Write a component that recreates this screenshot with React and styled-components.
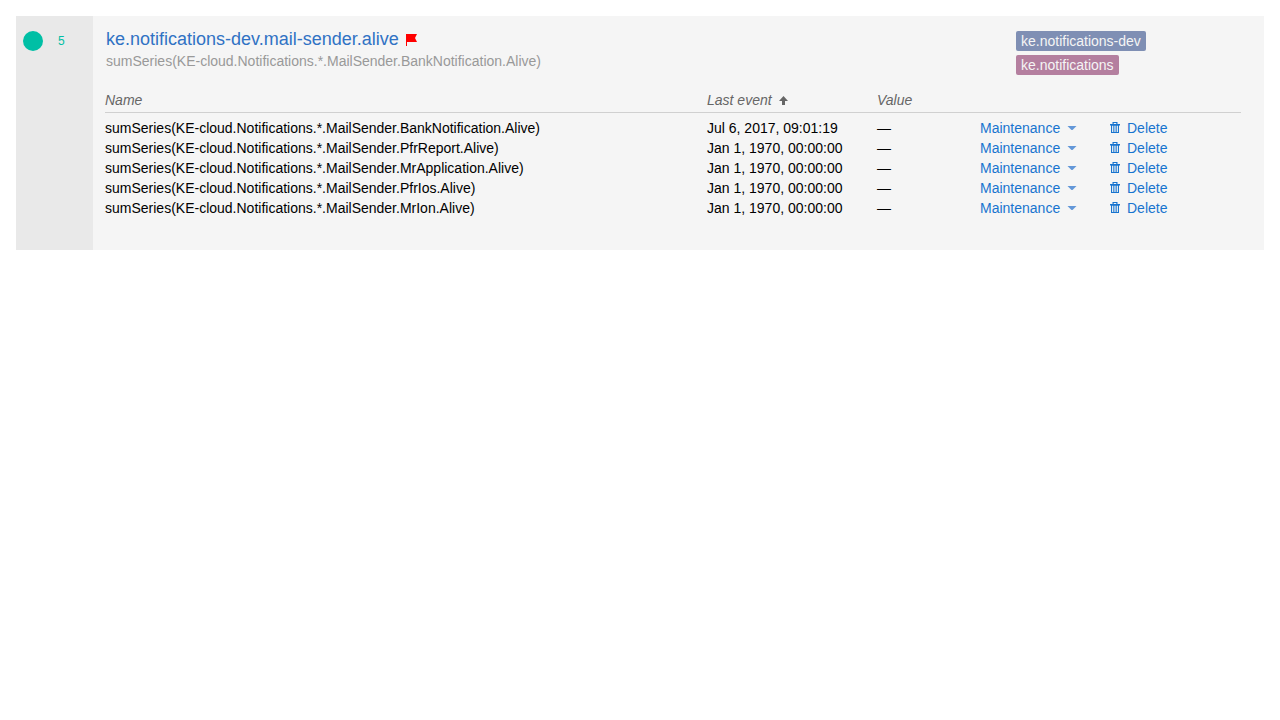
import React from "react";
import styled, { createGlobalStyle } from "styled-components";

const GlobalStyle = createGlobalStyle`
  *, *::before, *::after { box-sizing: border-box; }
  body {
    margin: 0;
    padding: 16px;
    background: #fff;
    color: #000;
    font-family: "Liberation Sans", Arial, sans-serif;
    font-size: 14px;
    line-height: 20px;
  }
`;

const Card = styled.article`
  display: flex;
  background: #f5f5f5;
`;

const StatePanel = styled.aside`
  display: flex;
  flex: 0 0 77px;
  align-items: flex-start;
  gap: 15px;
  padding: 15px 7px;
  background: #e9e9e9;
`;

const StateDot = styled.span`
  width: 20px;
  height: 20px;
  border-radius: 50%;
  background: #00bfa5;
`;

const StateCount = styled.span`
  color: #00bfa5;
  font-size: 12px;
`;

const Content = styled.div`
  flex: 1;
  min-width: 0;
  padding: 12px 23px 32px 12px;
`;

const Header = styled.header`
  display: flex;
  justify-content: space-between;
  padding-left: 1px;
  margin-bottom: 15px;
`;

const TitleLink = styled.a`
  display: flex;
  align-items: center;
  gap: 7px;
  color: #3072c4;
  font-size: 18px;
  line-height: 23px;
  text-decoration: none;
`;

const Title = styled.h1`
  margin: 0;
  font: inherit;
`;

const Target = styled.div`
  color: #999;
`;

const TagList = styled.div`
  display: flex;
  flex: 0 0 225px;
  flex-direction: column;
  align-items: flex-start;
  gap: 4px;
  padding-top: 3px;
`;

const Tag = styled.a`
  padding: 0 5px;
  border-radius: 2px;
  background: ${(p) => p.$color};
  color: #f5f5f5;
  text-decoration: none;
`;

const Table = styled.table`
  width: 100%;
  table-layout: fixed;
  border-collapse: separate;
  border-spacing: 0;
`;

const Col = styled.col`
  width: ${(p) => p.$width};
`;

const HeadCell = styled.th`
  height: 23px;
  padding: 0 0 2px;
  border-bottom: 1px solid #d0d0d0;
  color: #666;
  font-style: italic;
  font-weight: normal;
  text-align: left;
`;

const Body = styled.tbody`
  &::before {
    content: "";
    display: table-row;
    height: 5px;
  }
`;

const Cell = styled.td`
  height: 20px;
  padding: 0;
`;

const PlainButton = styled.button`
  display: inline-flex;
  align-items: center;
  gap: 7px;
  padding: 0;
  border: 0;
  background: none;
  color: ${(p) => p.$color || "#1874cf"};
  font: inherit;
  vertical-align: top;
  cursor: pointer;
`;

const Icon = styled.svg`
  display: block;
  flex: none;
  fill: currentColor;
`;

const FlagIcon = styled(Icon)`
  color: #f00;
`;

const CaretIcon = styled(Icon)`
  color: #6397d8;
`;

const Flag = () => (
  <FlagIcon width="12" height="12" viewBox="0 0 12 12" aria-hidden="true">
    <path d="M0 0H11L9 4L11 8H1V12H0Z" />
  </FlagIcon>
);

const ArrowUp = () => (
  <Icon width="9" height="9" viewBox="0 0 9 9" aria-hidden="true">
    <path d="M4.5 0L9 5H6V9H3V5H0Z" />
  </Icon>
);

const Caret = () => (
  <CaretIcon width="10" height="4" viewBox="0 0 10 4" aria-hidden="true">
    <path d="M0.5 0H9.5L5 4.5Z" />
  </CaretIcon>
);

const Trash = () => (
  <Icon width="10" height="12" viewBox="0 0 10 12" aria-hidden="true">
    <path
      fillRule="evenodd"
      d="M2.5 0H7.5V2H10V3.5H9V11H1V3.5H0V2H2.5ZM3.7 1V2H6.3V1ZM2.1 3.7V10H3.3V3.7ZM4.4 3.7V10H5.6V3.7ZM6.7 3.7V10H7.9V3.7Z"
    />
  </Icon>
);

const tags = [
  { name: "ke.notifications-dev", color: "#7f8fb4" },
  { name: "ke.notifications", color: "#b47f9f" },
];

const metrics = [
  { name: "BankNotification", time: "Jul 6, 2017, 09:01:19" },
  { name: "PfrReport", time: "Jan 1, 1970, 00:00:00" },
  { name: "MrApplication", time: "Jan 1, 1970, 00:00:00" },
  { name: "PfrIos", time: "Jan 1, 1970, 00:00:00" },
  { name: "MrIon", time: "Jan 1, 1970, 00:00:00" },
];

const seriesName = (name) => `sumSeries(KE-cloud.Notifications.*.MailSender.${name}.Alive)`;

export default function App() {
  return (
    <>
      <GlobalStyle />
      <Card>
        <StatePanel>
          <StateDot />
          <StateCount>5</StateCount>
        </StatePanel>
        <Content>
          <Header>
            <div>
              <TitleLink href="#trigger">
                <Title>ke.notifications-dev.mail-sender.alive</Title>
                <Flag />
              </TitleLink>
              <Target>{seriesName("BankNotification")}</Target>
            </div>
            <TagList>
              {tags.map((tag) => (
                <Tag key={tag.name} href="#tag" $color={tag.color}>
                  {tag.name}
                </Tag>
              ))}
            </TagList>
          </Header>
          <Table>
            <colgroup>
              <Col />
              <Col $width="170px" />
              <Col $width="103px" />
              <Col $width="130px" />
              <Col $width="131px" />
            </colgroup>
            <thead>
              <tr>
                <HeadCell scope="col">Name</HeadCell>
                <HeadCell scope="col" aria-sort="ascending">
                  <PlainButton type="button" $color="#666">
                    Last event
                    <ArrowUp />
                  </PlainButton>
                </HeadCell>
                <HeadCell scope="col">Value</HeadCell>
                <HeadCell as="td" />
                <HeadCell as="td" />
              </tr>
            </thead>
            <Body>
              {metrics.map((metric) => (
                <tr key={metric.name}>
                  <Cell>{seriesName(metric.name)}</Cell>
                  <Cell>{metric.time}</Cell>
                  <Cell>—</Cell>
                  <Cell>
                    <PlainButton type="button" aria-haspopup="menu">
                      Maintenance
                      <Caret />
                    </PlainButton>
                  </Cell>
                  <Cell>
                    <PlainButton type="button">
                      <Trash />
                      Delete
                    </PlainButton>
                  </Cell>
                </tr>
              ))}
            </Body>
          </Table>
        </Content>
      </Card>
    </>
  );
}
